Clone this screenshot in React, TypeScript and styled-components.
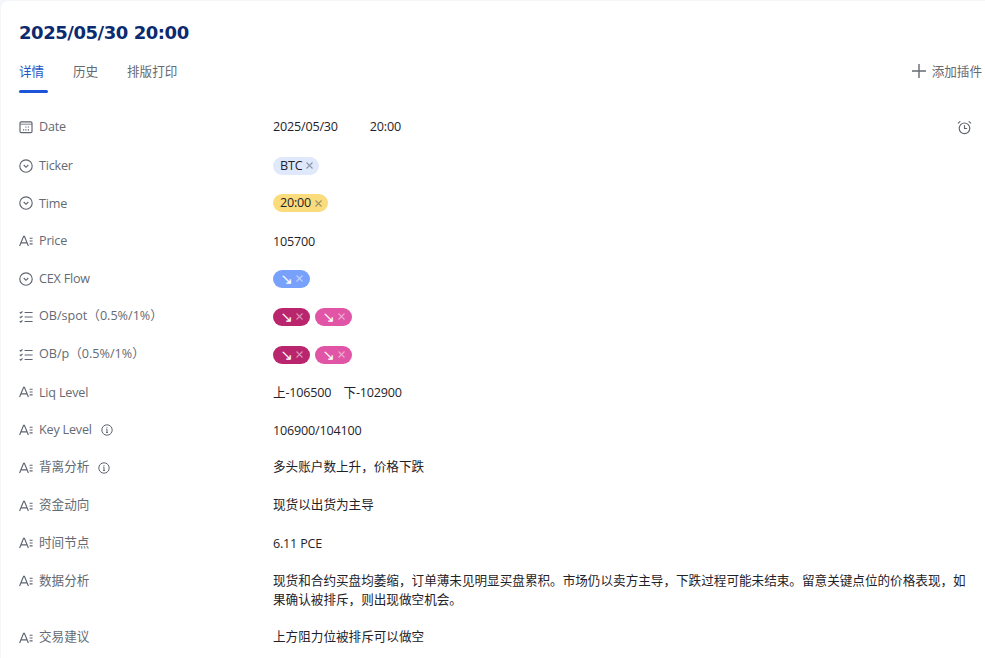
import React from 'react';
import styled, { createGlobalStyle } from 'styled-components';

const Global = createGlobalStyle`
  html, body { margin: 0; padding: 0; height: 100%; overflow: hidden; background: #f5f6f9; }
  body { font-family: "Open Sans", "Noto Sans CJK SC", sans-serif; font-size: 12.6px; }
`;

const Card = styled.main`
  margin: 1px 0 0 1px;
  height: 657px;
  overflow: hidden;
  background: #fff;
  border-radius: 8px 0 0 0;
  padding: 0 0 0 18px;
  box-sizing: border-box;
`;
const Title = styled.h1`
  margin: 0;
  height: 47px;
  padding-top: 20px;
  box-sizing: border-box;
  font: bold 18px/24px "DejaVu Sans", "Noto Sans CJK SC", sans-serif;
  color: #0b2a6f;
  letter-spacing: -0.45px;
`;
const TabBar = styled.nav`
  display: flex;
  justify-content: space-between;
  height: 60px;
  padding-top: 13px;
  box-sizing: border-box;
`;
const Tabs = styled.div`
  display: flex;
  gap: 25px;
`;
const Tab = styled.div<{ $active?: boolean }>`
  min-width: 29px;
  height: 29px;
  line-height: 21px;
  color: ${p => (p.$active ? '#2456c8' : '#646a73')};
  &::after {
    content: '';
    display: ${p => (p.$active ? 'block' : 'none')};
    height: 3px;
    margin-top: 8px;
    border-radius: 2px;
    background: #1d55d8;
  }
`;
const AddPlugin = styled.div`
  display: flex;
  align-items: flex-start;
  gap: 6px;
  height: 21px;
  line-height: 21px;
  color: #646a73;
  padding-right: 3px;
  white-space: nowrap;
  svg { margin-top: 3px; }
`;
const Rows = styled.section`
  display: flex;
  flex-direction: column;
`;
const Row = styled.div`
  display: flex;
  align-items: flex-start;
  padding: 9.45px 12px 9.45px 0;
  line-height: 18.9px;
`;
const Label = styled.div`
  flex: 0 0 254px;
  display: flex;
  align-items: center;
  gap: 6px;
  height: 18.9px;
  color: #646a73;
  white-space: nowrap;
`;
const LabelText = styled.span<{ $latin?: boolean }>`
  padding-top: ${p => (p.$latin ? '1.4px' : '0')};
  letter-spacing: ${p => (p.$latin ? '-0.2px' : '0')};
`;
const Info = styled.span`
  display: inline-flex;
  margin-left: 3px;
`;
const Value = styled.div`
  flex: 1;
  min-width: 0;
  color: #1f2329;
`;
const LatinValue = styled(Value)`
  padding-top: 1px;
  margin-bottom: -1px;
  letter-spacing: -0.2px;
`;
const DateValue = styled(Value)`
  display: flex;
  align-items: center;
  justify-content: space-between;
  padding-right: 1px;
`;
const DateParts = styled.div`
  display: flex;
  gap: 32px;
  padding-top: 1px;
  letter-spacing: -0.2px;
`;
const Pills = styled.div`
  display: flex;
  gap: 5px;
  height: 18.9px;
  align-items: center;
`;
const Pill = styled.span<{ $bg: string }>`
  display: inline-flex;
  align-items: center;
  height: 18px;
  padding: 0 6px 0 7px;
  gap: 4px;
  border-radius: 9px;
  background: ${p => p.$bg};
  color: #1f2329;
  line-height: 18px;
  letter-spacing: -0.2px;
`;
const ArrowBadge = styled(Pill)`
  color: #fff;
  gap: 3px;
  padding: 0 7px 0 7.5px;
`;
const Arrow = styled.span`
  font: 15px/18px "DejaVu Sans", sans-serif;
`;
const Close = styled.svg<{ $light?: boolean }>`
  flex: none;
  stroke: ${p => (p.$light ? 'rgba(255,255,255,0.5)' : 'rgba(60,70,90,0.5)')};
`;

const I = { width: 14, height: 14, viewBox: '0 0 14 14', fill: 'none', stroke: '#5f6570', strokeWidth: 1.15 } as const;
const DateIcon = () => (
  <svg {...I}>
    <rect x="1" y="1.8" width="12" height="10.8" rx="1.2" />
    <path d="M1 4.2h12" strokeWidth="0.8" />
    <path d="M6.3 7h1.2M8.8 7H10M4 9.8h1.2M6.3 9.8h1.2M8.8 9.8H10" strokeWidth="1.2" />
  </svg>
);
const SelectIcon = () => (
  <svg {...I}>
    <circle cx="7" cy="7" r="6.2" />
    <path d="M4.7 6 7 8.3 9.3 6" />
  </svg>
);
const TextIcon = () => (
  <svg {...I}>
    <path d="M.6 12 4.6 2.2h.8L9.4 12M2 8.8h6" />
    <path d="M10.6 4.2h3M10.6 7h3M10.6 9.8h3" />
  </svg>
);
const ListIcon = () => (
  <svg {...I}>
    <path d="M5.6 2.5h8M5.6 7h8M5.6 11.5h8" />
    <path d="m.8 2.2 1 1 1.7-1.8M.8 6.7l1 1 1.7-1.8M.8 11.2l1 1 1.7-1.8" />
  </svg>
);
const InfoIcon = () => (
  <svg width="12" height="12" viewBox="0 0 12 12" fill="none" stroke="#5f6570">
    <circle cx="6" cy="6" r="5.2" />
    <path d="M5.2 5.2H6v3.2M5 8.4h2M6 3.2v1" />
  </svg>
);
const AlarmIcon = () => (
  <svg width="15" height="15" viewBox="0 0 15 15" fill="none" stroke="#5f6570" strokeWidth="1.15">
    <circle cx="7.5" cy="8.3" r="5.3" />
    <path d="M7.5 5.2v3.3h2.6M1 3.4l2.3-2.1M14 3.4l-2.3-2.1" />
  </svg>
);
const PlusIcon = () => (
  <svg width="14" height="14" viewBox="0 0 14 14" stroke="#646a73" strokeWidth="1.4">
    <path d="M7 0v14M0 7h14" />
  </svg>
);
const X = ({ light }: { light?: boolean }) => (
  <Close $light={light} width="7" height="7" viewBox="0 0 7 7" strokeWidth="1.1">
    <path d="m.5.5 6 6M6.5.5l-6 6" />
  </Close>
);
const ArrowPill = ({ bg }: { bg: string }) => (
  <ArrowBadge $bg={bg}>
    <Arrow>↘</Arrow>
    <X light />
  </ArrowBadge>
);

type R = { icon: React.ReactNode; label: string; latin?: boolean; info?: boolean; value: React.ReactNode };
const rows: R[] = [
  { icon: <SelectIcon />, label: 'Ticker', latin: true, value: <Pills><Pill $bg="#e0e8fb">BTC<X /></Pill></Pills> },
  { icon: <SelectIcon />, label: 'Time', latin: true, value: <Pills><Pill $bg="#fadc7d">20:00<X /></Pill></Pills> },
  { icon: <TextIcon />, label: 'Price', latin: true, value: <LatinValue>105700</LatinValue> },
  { icon: <SelectIcon />, label: 'CEX Flow', latin: true, value: <Pills><ArrowPill bg="#78a1fb" /></Pills> },
  { icon: <ListIcon />, label: 'OB/spot（0.5%/1%）', value: <Pills><ArrowPill bg="#b9266e" /><ArrowPill bg="#e055a5" /></Pills> },
  { icon: <ListIcon />, label: 'OB/p（0.5%/1%）', value: <Pills><ArrowPill bg="#b9266e" /><ArrowPill bg="#e055a5" /></Pills> },
  { icon: <TextIcon />, label: 'Liq Level', latin: true, value: <LatinValue>上-106500&nbsp;&nbsp;&nbsp;&nbsp;下-102900</LatinValue> },
  { icon: <TextIcon />, label: 'Key Level', latin: true, info: true, value: <LatinValue>106900/104100</LatinValue> },
  { icon: <TextIcon />, label: '背离分析', info: true, value: '多头账户数上升，价格下跌' },
  { icon: <TextIcon />, label: '资金动向', value: '现货以出货为主导' },
  { icon: <TextIcon />, label: '时间节点', value: <LatinValue>6.11 PCE</LatinValue> },
  { icon: <TextIcon />, label: '数据分析', value: '现货和合约买盘均萎缩，订单薄未见明显买盘累积。市场仍以卖方主导，下跌过程可能未结束。留意关键点位的价格表现，如果确认被排斥，则出现做空机会。' },
  { icon: <TextIcon />, label: '交易建议', value: '上方阻力位被排斥可以做空' },
];

export default function App() {
  return (
    <>
      <Global />
      <Card>
        <Title>2025/05/30 20:00</Title>
        <TabBar>
          <Tabs>
            <Tab $active>详情</Tab>
            <Tab>历史</Tab>
            <Tab>排版打印</Tab>
          </Tabs>
          <AddPlugin><PlusIcon />添加插件</AddPlugin>
        </TabBar>
        <Rows>
          <Row>
            <Label><DateIcon /><LabelText $latin>Date</LabelText></Label>
            <DateValue>
              <DateParts><span>2025/05/30</span><span>20:00</span></DateParts>
              <AlarmIcon />
            </DateValue>
          </Row>
          {rows.map(r => (
            <Row key={r.label}>
              <Label>{r.icon}<LabelText $latin={r.latin}>{r.label}</LabelText>{r.info && <Info><InfoIcon /></Info>}</Label>
              <Value>{r.value}</Value>
            </Row>
          ))}
        </Rows>
      </Card>
    </>
  );
}
